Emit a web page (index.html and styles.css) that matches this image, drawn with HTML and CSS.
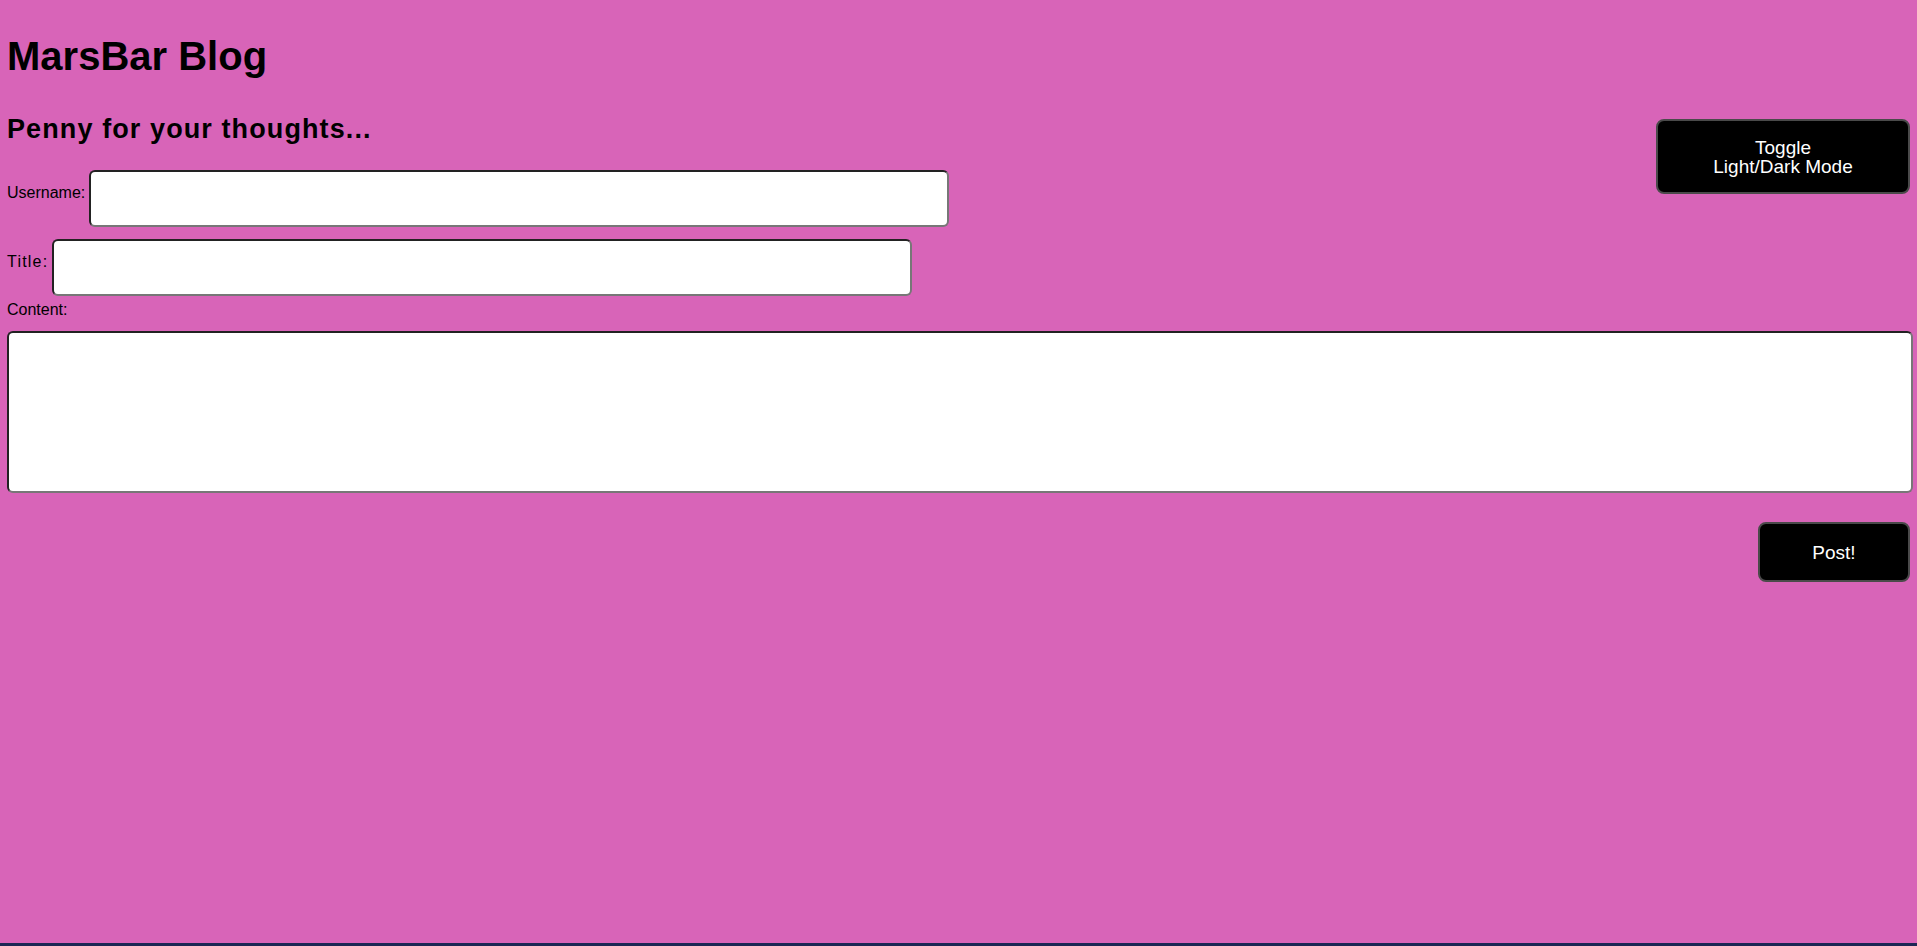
FILE: index.html
```html
<!DOCTYPE html>
<html lang="en">
<head>
<meta charset="utf-8">
<title>MarsBar Blog</title>
<link rel="stylesheet" href="styles.css">
</head>
<body>
<div class="page">
  <h1 class="site-title">MarsBar Blog</h1>
  <section class="compose">
    <button class="btn btn-toggle" type="button">Toggle<br>Light/Dark Mode</button>
    <h2 class="compose-title">Penny for your thoughts...</h2>
    <form class="post-form">
      <div class="field-row">
        <label class="field-label" for="username">Username:</label>
        <input class="field-input" id="username" type="text">
      </div>
      <div class="field-row field-row-title">
        <label class="field-label field-label-wide" for="title">Title:</label>
        <input class="field-input" id="title" type="text">
      </div>
      <label class="field-label field-label-block" for="content">Content:</label>
      <textarea class="field-textarea" id="content"></textarea>
      <div class="form-actions">
        <button class="btn btn-post" type="button">Post!</button>
      </div>
    </form>
  </section>
</div>
</body>
</html>
```

FILE: styles.css
```css
html {
  background: #1b2654;
}

body {
  margin: 0;
  font-family: "Comic Sans MS", "Liberation Sans", Arial, sans-serif;
  color: #000;
}

.page {
  box-sizing: border-box;
  height: 943px;
  background: #d864b8;
  padding: 36px 7px 0 7px;
}

.site-title {
  margin: 0;
  font-size: 40px;
  line-height: 40px;
  font-weight: bold;
}

.compose {
  padding-top: 40px;
}

.compose-title {
  margin: 0 0 27px 0;
  font-size: 27px;
  line-height: 27px;
  font-weight: bold;
  letter-spacing: 1.1px;
}

.btn {
  font-family: "Liberation Sans", Arial, sans-serif;
  font-size: 19px;
  line-height: 19px;
  color: #fff;
  background: #000;
  border: 2px solid #4a4a4a;
  border-radius: 8px;
  padding: 0;
  cursor: pointer;
}

.btn-toggle {
  float: right;
  margin-top: 3px;
  width: 254px;
  height: 75px;
}

.post-form {
  display: block;
}

.field-row {
  display: flex;
  align-items: flex-start;
  gap: 4px;
}

.field-row-title {
  margin-top: 12px;
}

.field-label {
  font-size: 16px;
  line-height: 16px;
  margin-top: 15px;
}

.field-label-wide {
  letter-spacing: 1.2px;
}

.field-label-block {
  display: block;
  margin-top: 6px;
}

.field-input {
  box-sizing: border-box;
  width: 860px;
  height: 57px;
  background: #fff;
  border: 2px solid;
  border-color: #222 #777 #777 #222;
  border-radius: 6px;
  padding: 0 4px;
  margin: 0;
}

.field-textarea {
  display: block;
  box-sizing: border-box;
  width: calc(100% + 3px);
  height: 162px;
  margin: 13px 0 0 0;
  padding: 2px;
  background: #fff;
  border: 2px solid;
  border-color: #222 #777 #777 #222;
  border-radius: 6px;
  resize: none;
}

.form-actions {
  display: flex;
  justify-content: flex-end;
  margin-top: 29px;
}

.btn-post {
  width: 152px;
  height: 60px;
}
```
